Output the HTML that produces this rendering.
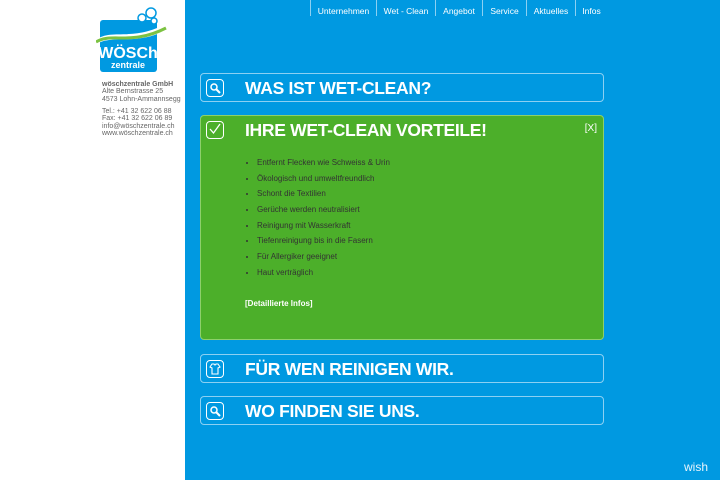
<!DOCTYPE html>
<html><head><meta charset="utf-8"><style>
*{margin:0;padding:0;box-sizing:border-box}
body{width:720px;height:480px;background:#0099e1;font-family:"Liberation Sans",sans-serif;position:relative;overflow:hidden}
#side{position:absolute;left:0;top:0;width:185px;height:480px;background:#fff}
.addr{position:absolute;left:102px;font-size:7px;color:#666;line-height:7.4px}
.nav{position:absolute;top:0;height:16px;border-left:1px solid #8cd0f2;color:#fff;font-size:8.5px;padding-top:6px;text-align:center}
.box{position:absolute;left:200px;width:404px;border:1px solid #8cd0f2;border-radius:4px}
.box h2{position:absolute;left:44px;color:#fff;font-size:17.5px;font-weight:bold;top:4px;letter-spacing:-0.3px}
.ic{position:absolute;left:5px;top:5px;width:18px;height:18px;border:1.5px solid #fff;border-radius:4px}
ul{position:absolute;left:56px;top:42px;list-style:disc;color:#333;font-size:8px}
li{height:15.7px;line-height:10px}
</style></head><body>
<div id="side">
<svg style="position:absolute;left:96px;top:6px" width="72" height="68" viewBox="0 0 72 68">
<rect x="4" y="14" width="57" height="52" rx="3" fill="#0099e1"/>
<path d="M0 34 C15 22 35 36 70 18 L70 24 C40 40 18 28 0 38Z" fill="#fff"/>
<path d="M0 36 C15 26 35 40 70 22" stroke="#7cc242" stroke-width="3" fill="none"/>
<circle cx="46" cy="12" r="4" fill="#fff" stroke="#0099e1" stroke-width="1.5"/>
<circle cx="55" cy="7" r="5" fill="#fff" stroke="#0099e1" stroke-width="1.5"/>
<circle cx="58" cy="15" r="3" fill="#fff" stroke="#0099e1" stroke-width="1.5"/>
<text x="32" y="52" fill="#fff" font-size="16" font-weight="bold" text-anchor="middle" font-family="Liberation Sans">WÖSCh</text>
<text x="32" y="62" fill="#fff" font-size="9" font-weight="bold" text-anchor="middle" font-family="Liberation Sans">zentrale</text>
</svg>
<div class="addr" style="top:81px"><b>wöschzentrale GmbH</b><br>Alte Bernstrasse 25<br>4573 Lohn-Ammannsegg</div>
<div class="addr" style="top:108px">Tel.: +41 32 622 06 88<br>Fax: +41 32 622 06 89<br>info@wöschzentrale.ch<br>www.wöschzentrale.ch</div>
</div>
<div class="nav" style="left:310px;width:66px">Unternehmen</div>
<div class="nav" style="left:376px;width:59px">Wet - Clean</div>
<div class="nav" style="left:435px;width:47px">Angebot</div>
<div class="nav" style="left:482px;width:44px">Service</div>
<div class="nav" style="left:526px;width:49px">Aktuelles</div>
<div class="nav" style="left:575px;width:32px">Infos</div>

<div class="box" style="top:73px;height:29px"><div class="ic"></div><svg style="position:absolute;left:8px;top:8px" width="12" height="12"><circle cx="5" cy="5" r="3" stroke="#fff" stroke-width="1.5" fill="none"/><path d="M7 7 L11 11" stroke="#fff" stroke-width="2"/></svg><h2>WAS IST WET-CLEAN?</h2></div>
<div class="box" style="top:115px;height:225px;background:#4caf2a;border-color:#8dd06a"><div class="ic"></div><svg style="position:absolute;left:8px;top:7px" width="12" height="12"><path d="M1 6 L4.5 10 L11 1" stroke="#fff" stroke-width="1.3" fill="none"/></svg><h2>IHRE WET-CLEAN VORTEILE!</h2>
<div style="position:absolute;right:6px;top:7px;color:#fff;font-size:10px">[X]</div>
<ul><li>Entfernt Flecken wie Schweiss &amp; Urin</li><li>Ökologisch und umweltfreundlich</li><li>Schont die Textilien</li><li>Gerüche werden neutralisiert</li><li>Reinigung mit Wasserkraft</li><li>Tiefenreinigung bis in die Fasern</li><li>Für Allergiker geeignet</li><li>Haut verträglich</li></ul>
<div style="position:absolute;left:44px;top:183px;color:#fff;font-size:8px;font-weight:bold">[Detaillierte Infos]</div></div>
<div class="box" style="top:354px;height:29px"><div class="ic"></div><svg style="position:absolute;left:8px;top:8px" width="12" height="12"><path d="M3 1 L1 4 L3 5 L3 11 L9 11 L9 5 L11 4 L9 1 L7 1 Q6 3 5 1Z" stroke="#fff" stroke-width="1.1" fill="none"/></svg><h2>FÜR WEN REINIGEN WIR.</h2></div>
<div class="box" style="top:396px;height:29px"><div class="ic"></div><svg style="position:absolute;left:8px;top:8px" width="12" height="12"><circle cx="5" cy="5" r="3" stroke="#fff" stroke-width="1.5" fill="none"/><path d="M7 7 L11 11" stroke="#fff" stroke-width="2"/></svg><h2>WO FINDEN SIE UNS.</h2></div>
<div style="position:absolute;left:684px;top:460px;color:#e8f4fc;font-size:12px">wish</div>
</body></html>
